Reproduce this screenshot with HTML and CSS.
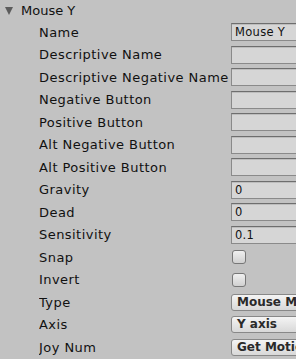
FILE: index.html
```html
<!DOCTYPE html>
<html lang="en">
<head>
    <meta charset="UTF-8">
    <meta name="viewport" content="width=device-width, initial-scale=1.0">
    <title>Input - Mouse Y</title>
    <link rel="stylesheet" href="styles.css">
</head>
<body>
    <div class="axis-header">
        <span class="fold-arrow"></span>
        <span>Mouse Y</span>
    </div>
    <div class="axis-props">
        <div class="prop-row"><span class="prop-label">Name</span><div class="text-field">Mouse Y</div></div>
        <div class="prop-row"><span class="prop-label">Descriptive Name</span><div class="text-field"></div></div>
        <div class="prop-row"><span class="prop-label">Descriptive Negative Name</span><div class="text-field"></div></div>
        <div class="prop-row"><span class="prop-label">Negative Button</span><div class="text-field"></div></div>
        <div class="prop-row"><span class="prop-label">Positive Button</span><div class="text-field"></div></div>
        <div class="prop-row"><span class="prop-label">Alt Negative Button</span><div class="text-field"></div></div>
        <div class="prop-row"><span class="prop-label">Alt Positive Button</span><div class="text-field"></div></div>
        <div class="prop-row"><span class="prop-label">Gravity</span><div class="text-field">0</div></div>
        <div class="prop-row"><span class="prop-label">Dead</span><div class="text-field">0</div></div>
        <div class="prop-row"><span class="prop-label">Sensitivity</span><div class="text-field">0.1</div></div>
        <div class="prop-row"><span class="prop-label">Snap</span><div class="check-box"></div></div>
        <div class="prop-row"><span class="prop-label">Invert</span><div class="check-box"></div></div>
        <div class="prop-row"><span class="prop-label">Type</span><div class="popup">Mouse Movement</div></div>
        <div class="prop-row"><span class="prop-label">Axis</span><div class="popup">Y axis</div></div>
        <div class="prop-row"><span class="prop-label">Joy Num</span><div class="popup">Get Motion from all Joysticks</div></div>
    </div>
</body>
</html>
```

FILE: styles.css
```css
body {
    margin: 0;
    width: 296px;
    height: 359px;
    overflow: hidden;
    background-color: #c2c2c2;
    font-family: "DejaVu Sans", sans-serif;
    font-size: 13px;
    color: #111;
}
.axis-header {
    height: 21px;
    display: flex;
    align-items: center;
    padding-left: 5px;
    gap: 8px;
}
.fold-arrow {
    width: 0;
    height: 0;
    border-left: 4px solid transparent;
    border-right: 4px solid transparent;
    border-top: 8px solid #5c5c5c;
}
.axis-props {
    padding-left: 39px;
}
.prop-row {
    height: 22.5px;
    display: grid;
    grid-template-columns: 192px 120px;
    align-items: center;
}
.prop-label {
    white-space: nowrap;
    overflow: hidden;
    letter-spacing: 0.45px;
}
.text-field {
    height: 16px;
    line-height: 16px;
    padding-left: 3px;
    border: 1px solid #8a8a8a;
    border-top-color: #6e6e6e;
    background-color: #d6d6d6;
    box-shadow: inset 0 1px 0 #bdbdbd;
    white-space: nowrap;
    font-size: 11.5px;
    letter-spacing: 0.3px;
}
.check-box {
    width: 12px;
    height: 12px;
    border: 1px solid #777;
    border-radius: 3px;
    background: linear-gradient(#f0f0f0, #d0d0d0);
    margin-left: 1px;
}
.popup {
    height: 15px;
    line-height: 15px;
    padding-left: 5px;
    border: 1px solid #888;
    border-radius: 3px;
    background: linear-gradient(#f4f4f4, #d8d8d8);
    white-space: nowrap;
    overflow: hidden;
    font-weight: bold;
    font-size: 12px;
    color: #2a2a2a;
}
```
